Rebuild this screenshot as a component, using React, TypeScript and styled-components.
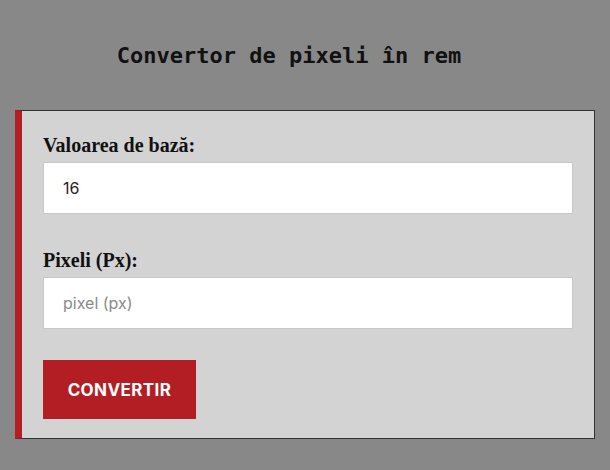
import React, { useState } from 'react';
import styled, { createGlobalStyle } from 'styled-components';

const GlobalStyle = createGlobalStyle`
  html, body {
    margin: 0;
    padding: 0;
    background: #888888;
  }
  * {
    box-sizing: border-box;
  }
`;

const Page = styled.div`
  width: 610px;
  height: 470px;
  padding: 0 15px;
  overflow: hidden;
`;

const Title = styled.h1`
  margin: 0;
  padding: 43px 32px 0 0;
  height: 110px;
  text-align: center;
  font-family: "DejaVu Sans Mono", "Liberation Mono", monospace;
  font-size: 22px;
  font-weight: 700;
  color: #111111;
`;

const Card = styled.form`
  display: flex;
  flex-direction: column;
  background: #d3d3d3;
  border: 1px solid #333333;
  border-left: 7px solid #b31e24;
  padding: 23px 21px 19px 21px;
`;

const Field = styled.div`
  display: flex;
  flex-direction: column;
  gap: 6px;
  margin-bottom: 35px;

  &:nth-of-type(2) {
    margin-bottom: 31px;
  }
`;

const Label = styled.label`
  font-family: "Liberation Serif", "DejaVu Serif", serif;
  font-size: 20px;
  font-weight: 700;
  color: #111111;
  line-height: 22px;
`;

const Input = styled.input`
  height: 52px;
  width: 100%;
  border: 1px solid #c8c8c8;
  background: #ffffff;
  padding: 0 19px;
  font-family: Inter, "Noto Sans", sans-serif;
  font-size: 16px;
  color: #222222;
  outline: none;

  &::placeholder {
    color: #8a8a8a;
  }
`;

const Button = styled.button`
  align-self: flex-start;
  width: 153px;
  height: 59px;
  border: none;
  background: #b31e24;
  color: #ffffff;
  font-family: Inter, "Noto Sans", sans-serif;
  font-size: 17px;
  font-weight: 700;
  letter-spacing: 0.4px;
  cursor: pointer;
`;

const App: React.FC = () => {
  const [base, setBase] = useState<string>('16');
  const [px, setPx] = useState<string>('');

  return (
    <Page>
      <GlobalStyle />
      <Title>Convertor de pixeli în rem</Title>
      <Card onSubmit={(e) => e.preventDefault()}>
        <Field>
          <Label htmlFor="base">Valoarea de bază:</Label>
          <Input id="base" value={base} onChange={(e) => setBase(e.target.value)} />
        </Field>
        <Field>
          <Label htmlFor="px">Pixeli (Px):</Label>
          <Input id="px" placeholder="pixel (px)" value={px} onChange={(e) => setPx(e.target.value)} />
        </Field>
        <Button type="submit">CONVERTIR</Button>
      </Card>
    </Page>
  );
};

export default App;
